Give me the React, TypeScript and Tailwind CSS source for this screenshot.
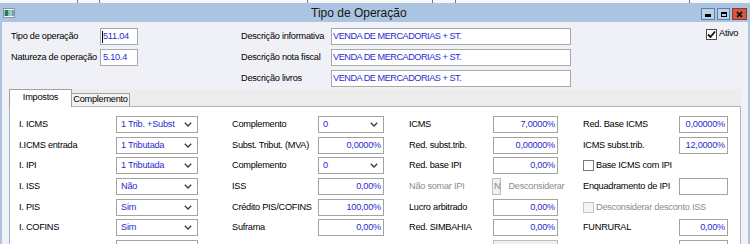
import React from "react";

function Chevron() {
  return (
    <svg width="8" height="5" viewBox="0 0 8 5" className="shrink-0">
      <path d="M0.8 0.8 L4 4 L7.2 0.8" fill="none" stroke="#3a3a3a" strokeWidth="1.3" />
    </svg>
  );
}

function Sel({ v, w }: { v: string; w: string }) {
  return (
    <div
      className={`${w} h-[17px] shrink-0 border border-[#a3a3a3] bg-white flex items-center justify-between pl-[4px] pr-[5px] text-[#2b2bd0] whitespace-nowrap`}
    >
      <span>{v}</span>
      <Chevron />
    </div>
  );
}

function Num({ v, w, disabled }: { v: string; w: string; disabled?: boolean }) {
  return (
    <div
      className={`${w} h-[17px] shrink-0 border ${
        disabled ? "border-[#bdbdbd] bg-[#f0f0f0]" : "border-[#a3a3a3] bg-white"
      } flex items-center justify-end pr-[2px] text-[#2b2bd0] whitespace-nowrap`}
    >
      {v}
    </div>
  );
}

function L({ t, w, grey }: { t: string; w: string; grey?: boolean }) {
  return (
    <div className={`${w} shrink-0 whitespace-nowrap ${grey ? "text-[#8c8c8c]" : "text-black"}`}>{t}</div>
  );
}

function Check({ checked, disabled }: { checked?: boolean; disabled?: boolean }) {
  return (
    <div
      className={`w-[11px] h-[11px] shrink-0 border flex items-center justify-center ${
        disabled ? "border-[#c4c4c4] bg-[#f4f4f4]" : checked ? "border-[#4a4a4a] bg-white" : "border-[#7a7a7a] bg-white"
      }`}
    >
      {checked && (
        <svg width="9" height="9" viewBox="0 0 9 9">
          <path d="M1 4.5 L3.5 7 L8 1.5" fill="none" stroke="#111" strokeWidth="1.8" />
        </svg>
      )}
    </div>
  );
}

function Row({ children }: { children: React.ReactNode }) {
  return <div className="flex items-center h-[17px] shrink-0">{children}</div>;
}

export default function App() {
  return (
    <div className="w-[750px] h-[244px] overflow-hidden flex flex-col font-['Liberation_Sans',Arial,sans-serif] text-[9.2px] tracking-[-0.25px] leading-none">
      {/* top strip */}
      <div className="h-[3px] flex bg-[#f7f7f7] shrink-0">
        <div className="w-[78px] border-r border-[#7a7a7a]" />
        <div className="w-[22px] border-r border-[#7a7a7a]" />
        <div className="w-[208px] border-r border-[#7a7a7a]" />
        <div className="w-[125px] border-r border-[#7a7a7a]" />
        <div className="w-[23px] border-r border-[#7a7a7a]" />
        <div className="w-[234px] border-r border-[#7a7a7a]" />
        <div className="flex-1" />
      </div>
      {/* window */}
      <div className="flex-1 flex flex-col bg-[#abc4e2] px-[2px] min-h-0">
        {/* title bar */}
        <div className="h-[19px] shrink-0 flex">
          <div className="w-[309px] shrink-0 flex items-start pt-[5px] pl-[1px]">
            <svg width="12" height="10" viewBox="0 0 12 10">
              <rect x="0.5" y="0.5" width="11" height="9" fill="#f4f6f8" stroke="#8a96a4" />
              <rect x="1.5" y="2" width="4" height="6" fill="#2f7a56" />
              <rect x="6" y="2" width="2.5" height="6" fill="#8fc7b0" />
              <rect x="8.8" y="2" width="2" height="6" fill="#6b8fc4" />
            </svg>
          </div>
          <div className="flex items-center text-[12px] tracking-normal text-[#151515]">Tipo de Operação</div>
          <div className="flex-1 flex justify-end items-start pt-[5px] pr-[1px] gap-[2px]">
            <div className="w-[14px] h-[12px] bg-[#bcd0ea] border border-[#5f7ea8] flex items-end justify-center pb-[2px]">
              <div className="w-[6px] h-[3px] bg-black" />
            </div>
            <div className="w-[13px] h-[12px] bg-[#bcd0ea] border border-[#5f7ea8] flex items-center justify-center">
              <div className="w-[6px] h-[5px] border border-black border-t-2" />
            </div>
            <div className="w-[15px] h-[12px] bg-[#d05b42] border border-[#8c3b2a] flex items-center justify-center">
              <svg width="7" height="7" viewBox="0 0 7 7">
                <path d="M1 1 L6 6 M6 1 L1 6" stroke="#1e1210" strokeWidth="1.8" />
              </svg>
            </div>
          </div>
        </div>
        {/* body */}
        <div className="flex-1 bg-[#f0f0f7] flex flex-col min-h-0">
          {/* header */}
          <div className="flex pt-[6px] pl-[9px] shrink-0">
            <div className="flex flex-col gap-[4px]">
              <Row>
                <L t="Tipo de operação" w="w-[89px]" />
                <div className="w-[38px] h-[17px] border border-[#a9a9a9] bg-white flex items-center pl-[1px] text-[#2b2bd0]">
                  <span className="w-px h-[12px] bg-black -mr-px" />
                  <span className="pl-[1px]">511.04</span>
                </div>
              </Row>
              <Row>
                <L t="Natureza de operação" w="w-[89px]" />
                <div className="w-[38px] h-[17px] border border-[#a9a9a9] bg-white flex items-center pl-[2px] text-[#2b2bd0]">
                  5.10.4
                </div>
              </Row>
            </div>
            <div className="ml-[103px] flex flex-col gap-[4px]">
              {["Descrição informativa", "Descrição nota fiscal", "Descrição livros"].map((t) => (
                <Row key={t}>
                  <L t={t} w="w-[90px]" />
                  <div className="w-[240px] h-[17px] border border-[#a9a9a9] bg-white flex items-center pl-[1px] text-[#2b2bd0] tracking-[-0.5px]">
                    VENDA DE MERCADORIAS + ST.
                  </div>
                </Row>
              ))}
            </div>
            <div className="ml-[135px] flex items-center h-[12px] gap-[2px] self-start">
              <Check checked />
              <span className="text-black">Ativo</span>
            </div>
          </div>
          {/* tab control */}
          <div className="mt-[2px] ml-[7px] w-[732px] flex-1 flex flex-col min-h-0">
            <div className="h-[17px] shrink-0 bg-[#ececec] flex items-end relative z-10">
              <div className="w-[63px] h-[18px] -mb-px bg-white border border-b-0 border-[#a0a0a0] flex items-center justify-center pb-[2px] text-black">
                Impostos
              </div>
              <div className="w-[58px] h-[13px] bg-[#f3f3f3] border border-b-0 border-l-0 border-[#a0a0a0] flex items-center justify-center text-black">
                Complemento
              </div>
            </div>
            <div className="flex-1 bg-white border-t border-r border-[#b4b4b4] border-l border-l-[#9fb3cc] pt-[9px] pl-[9px] flex flex-col gap-[3.67px] min-h-0">
              <Row>
                <L t="I. ICMS" w="w-[97px]" />
                <Sel v="1 Trib. +Subst" w="w-[82px]" />
                <div className="w-[34px]" />
                <L t="Complemento" w="w-[86px]" />
                <Sel v="0" w="w-[66px]" />
                <div className="w-[25px]" />
                <L t="ICMS" w="w-[84px]" />
                <Num v="7,0000%" w="w-[65px]" />
                <div className="w-[25px]" />
                <L t="Red. Base ICMS" w="w-[96px]" />
                <Num v="0,00000%" w="w-[49px]" />
              </Row>
              <Row>
                <L t="I.ICMS entrada" w="w-[97px]" />
                <Sel v="1 Tributada" w="w-[82px]" />
                <div className="w-[34px]" />
                <L t="Subst. Tribut. (MVA)" w="w-[86px]" />
                <Num v="0,0000%" w="w-[66px]" />
                <div className="w-[25px]" />
                <L t="Red. subst.trib." w="w-[84px]" />
                <Num v="0,00000%" w="w-[65px]" />
                <div className="w-[25px]" />
                <L t="ICMS subst.trib." w="w-[96px]" />
                <Num v="12,0000%" w="w-[49px]" />
              </Row>
              <Row>
                <L t="I. IPI" w="w-[97px]" />
                <Sel v="1 Tributada" w="w-[82px]" />
                <div className="w-[34px]" />
                <L t="Complemento" w="w-[86px]" />
                <Sel v="0" w="w-[66px]" />
                <div className="w-[25px]" />
                <L t="Red. base IPI" w="w-[84px]" />
                <Num v="0,00%" w="w-[65px]" />
                <div className="w-[25px]" />
                <div className="flex items-center gap-[2px]">
                  <Check />
                  <span className="text-black whitespace-nowrap">Base ICMS com IPI</span>
                </div>
              </Row>
              <Row>
                <L t="I. ISS" w="w-[97px]" />
                <Sel v="Não" w="w-[82px]" />
                <div className="w-[34px]" />
                <L t="ISS" w="w-[86px]" />
                <Num v="0,00%" w="w-[66px]" />
                <div className="w-[25px]" />
                <div className="w-[149px] shrink-0 flex items-center">
                  <L t="Não somar IPI" w="w-[83px]" grey />
                  <div className="w-[13px] h-[17px] border border-[#bdbdbd] bg-[#f0f0f0] flex items-center pl-[1px] text-[#8c8c8c]">
                    N
                  </div>
                  <span className="ml-[7px] text-[#8c8c8c] whitespace-nowrap">Desconsiderar</span>
                </div>
                <div className="w-[25px]" />
                <L t="Enquadramento de IPI" w="w-[96px]" />
                <Num v="" w="w-[49px]" />
              </Row>
              <Row>
                <L t="I. PIS" w="w-[97px]" />
                <Sel v="Sim" w="w-[82px]" />
                <div className="w-[34px]" />
                <L t="Crédito PIS/COFINS" w="w-[86px]" />
                <Num v="100,00%" w="w-[66px]" />
                <div className="w-[25px]" />
                <L t="Lucro arbitrado" w="w-[84px]" />
                <Num v="0,00%" w="w-[65px]" />
                <div className="w-[25px]" />
                <div className="flex items-center gap-[2px]">
                  <Check disabled />
                  <span className="text-[#8c8c8c] whitespace-nowrap">Desconsiderar desconto ISS</span>
                </div>
              </Row>
              <Row>
                <L t="I. COFINS" w="w-[97px]" />
                <Sel v="Sim" w="w-[82px]" />
                <div className="w-[34px]" />
                <L t="Suframa" w="w-[86px]" />
                <Num v="0,00%" w="w-[66px]" />
                <div className="w-[25px]" />
                <L t="Red. SIMBAHIA" w="w-[84px]" />
                <Num v="0,00%" w="w-[65px]" />
                <div className="w-[25px]" />
                <L t="FUNRURAL" w="w-[96px]" />
                <Num v="0,00%" w="w-[49px]" />
              </Row>
              <Row>
                <L t="" w="w-[97px]" />
                <Sel v="" w="w-[82px]" />
                <div className="w-[34px]" />
                <L t="" w="w-[86px]" />
                <div className="w-[66px]" />
                <div className="w-[25px]" />
                <L t="" w="w-[84px]" />
                <Num v="" w="w-[65px]" disabled />
                <div className="w-[25px]" />
                <L t="" w="w-[96px]" />
                <Num v="" w="w-[49px]" />
              </Row>
            </div>
          </div>
        </div>
      </div>
    </div>
  );
}
